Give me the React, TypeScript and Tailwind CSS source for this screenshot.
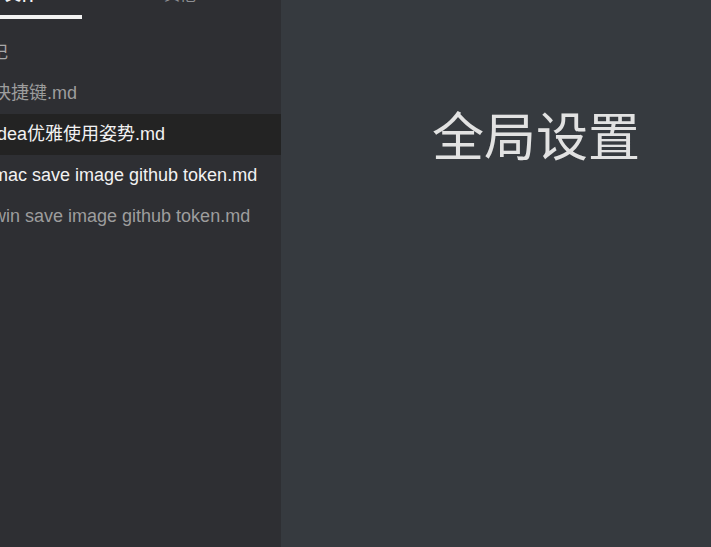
const FILES = [
  { name: "快捷键.md", tone: "text-[#9d9d9d]" },
  { name: "idea优雅使用姿势.md", tone: "text-[#f2f2f2]", active: true },
  { name: "mac save image github token.md", tone: "text-[#f2f2f2]" },
  { name: "win save image github token.md", tone: "text-[#9d9d9d]" },
];

function Sidebar() {
  return (
    <aside className="w-[281px] shrink-0 bg-[#2e2f33] overflow-hidden">
      {/* tabs (scrolled partly out of view) */}
      <div className="-mt-[17px] flex">
        <div className="-ml-[40px] w-[122px] flex flex-col items-center">
          <span className="h-6 leading-6 text-[16px] font-bold text-[#f4f4f4]">文件</span>
          <div className="mt-[8px] h-1 w-full bg-[#f2f2f2]" />
        </div>
        <div className="ml-[33px] w-[130px] flex flex-col items-center">
          <span className="h-6 leading-6 text-[16px] text-[#8f9094]">其他</span>
        </div>
      </div>

      <div className="mt-[13px] -ml-[26px] h-[41px] flex items-center text-[17px] text-[#a8a8a8]">笔记</div>

      <ul>
        {FILES.map((f) => (
          <li
            key={f.name}
            className={`h-[41px] flex items-center whitespace-nowrap text-[18px] leading-none pb-[2px] ${f.tone} ${
              f.active ? "bg-[#232323]" : ""
            }`}
          >
            <span className="-ml-[7px]">{f.name}</span>
          </li>
        ))}
      </ul>
    </aside>
  );
}

export default function App() {
  return (
    <div
      className="flex h-[547px] w-[711px] overflow-hidden"
      style={{ fontFamily: '"Liberation Sans", "Noto Sans CJK SC", sans-serif' }}
    >
      <Sidebar />
      <main className="flex-1 bg-[#363a3f] pt-[112px] pl-[151px]">
        <h1 className="text-[52px] leading-none text-[#e2e2e2] whitespace-nowrap">全局设置</h1>
      </main>
    </div>
  );
}
